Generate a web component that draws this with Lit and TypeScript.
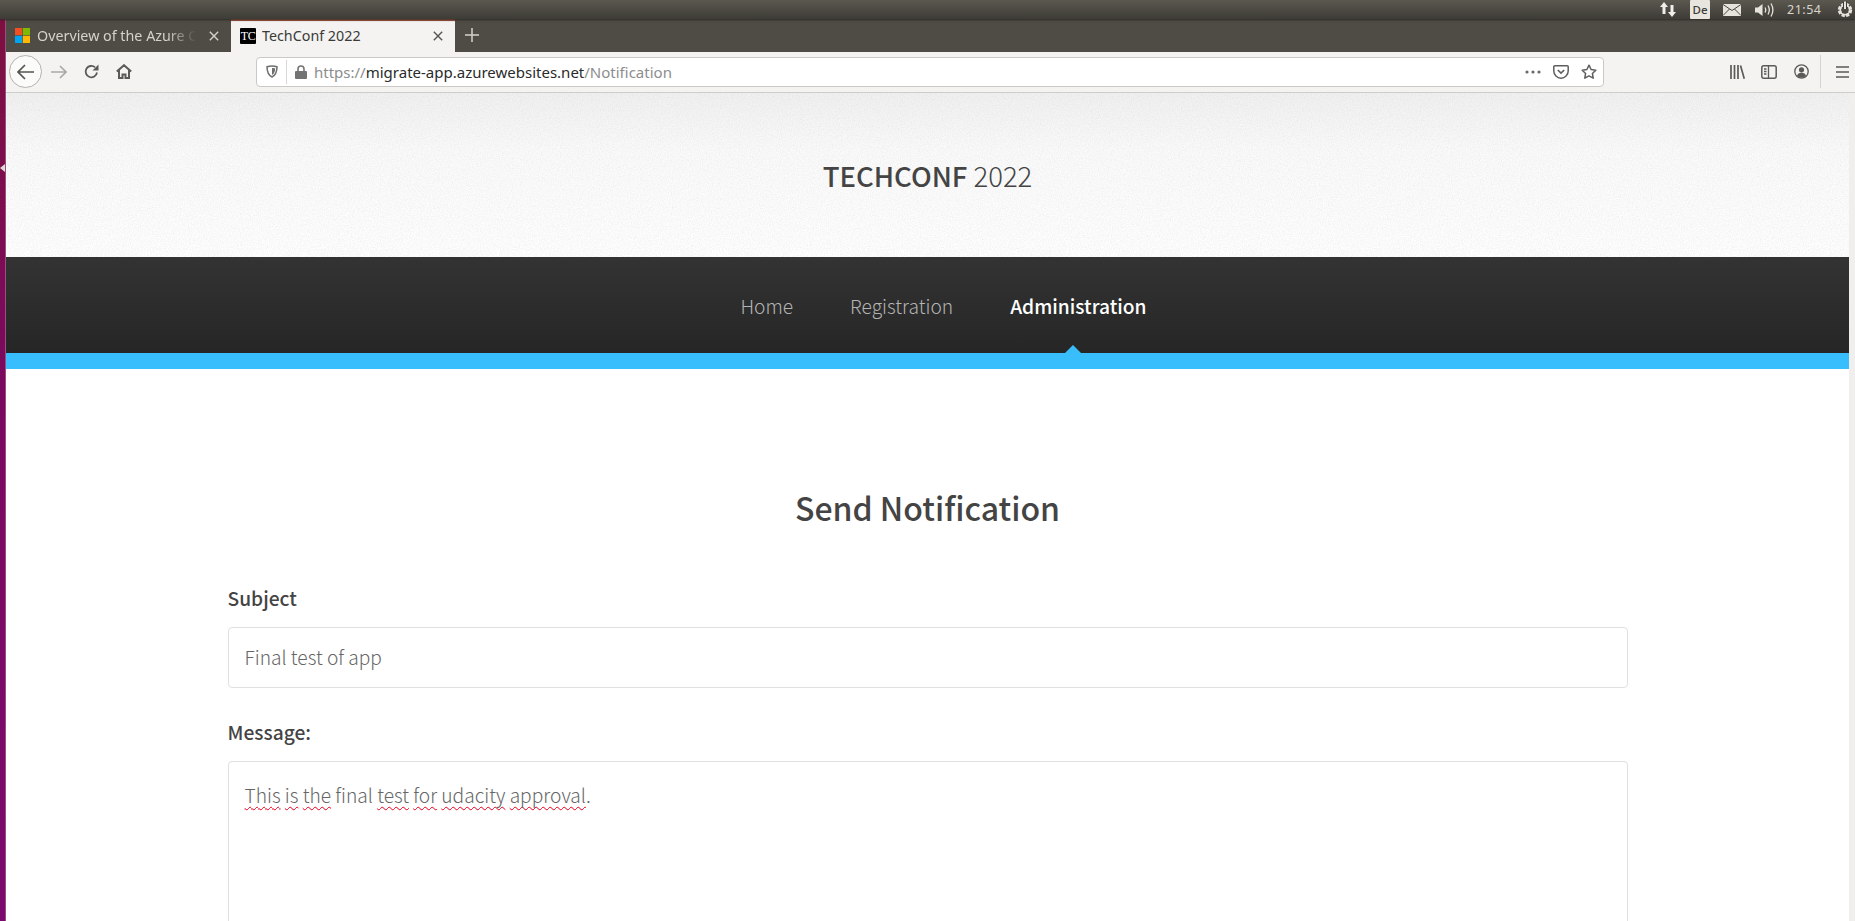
import { LitElement, html, css, svg } from "lit";
import { customElement } from "lit/decorators.js";

const closeX = svg`<svg class="ic" width="10" height="10" viewBox="0 0 10 10"><path d="M.8.8l8.4 8.4M9.200.8L.8 9.200" fill="none" stroke="currentColor" stroke-width="1.400"/></svg>`;

@customElement("app-root")
export class AppRoot extends LitElement {
  static styles = css`
    :host { display: block; width: 1855px; height: 921px; overflow: hidden; background: #fff; }
    * { box-sizing: border-box; }
    .ic { display: block; flex: none; }
    .ui { font-family: "Noto Sans", "Open Sans", sans-serif; }

    .panel { height: 19px; display: flex; align-items: center; justify-content: flex-end; padding-right: 2px;
      background: linear-gradient(#5b5850, #3e3c36); box-shadow: 0 1px 2px #2c2a26; position: relative; z-index: 2; color: #dedbd4; }
    .panel .arrows { margin-right: 13px; }
    .de { width: 20px; height: 19px; background: #e8e5df; color: #3c3b37; font-size: 11.500px; font-weight: 500; display: flex; align-items: center; justify-content: center; border-radius: 1px; margin-right: 13px; }
    .panel .mail { margin-right: 14px; }
    .panel .vol { margin-right: 13px; }
    .clock { font-size: 12.500px; letter-spacing: .5px; width: 38px; margin-right: 12px; white-space: nowrap; color: #d8d5ce; }

    .frame { display: flex; height: 902px; }
    .launcher { width: 6px; flex: none; position: relative; background: linear-gradient(#7d1040, #7a0a5e 40%, #7b0a6e); border-right: 1px solid #9a4f80; }
    .launcher::after { content: ""; position: absolute; top: 145px; left: 0; border: 4px solid transparent; border-left: 0; border-right: 5px solid #dedbd6; }
    .window { flex: 1; min-width: 0; display: flex; flex-direction: column; }

    .tabs { height: 33px; flex: none; background: #4f4c45; display: flex; align-items: stretch; }
    .tab { width: 225px; display: flex; align-items: center; padding-left: 9px; color: #d5d2cb; font-size: 14.300px; white-space: nowrap; }
    .tab.on { width: 224px; background: #f4f3f1; color: #3a3a38; border-top: 2px solid #b4583f; padding-bottom: 2px; }
    .fav { margin-right: 7px; }
    .tc { width: 16px; height: 16px; background: #000; color: #fff; font: 12px/16px "Liberation Serif", serif; text-align: center; border-radius: 1px; flex: none; letter-spacing: -.5px; margin-right: 6px; }
    .tab-text { flex: 1; overflow: hidden; }
    .tab:not(.on) .tab-text { -webkit-mask-image: linear-gradient(90deg, #000 78%, transparent 96%); mask-image: linear-gradient(90deg, #000 78%, transparent 96%); }
    .tab .x { margin: 0 12px 0 6px; color: #d5d2cb; }
    .tab.on .x { color: #55544f; }
    .plus { margin: 9px 0 0 10px; color: #d5d2cb; }

    .toolbar { height: 41px; flex: none; background: #f4f3f1; border-bottom: 1px solid #cfcdc9; display: flex; align-items: center; color: #5a5a58; padding-bottom: 1px; }
    .back { width: 33px; height: 33px; border-radius: 50%; border: 1px solid #b4b2ae; background: #fbfbfa; display: flex; align-items: center; justify-content: center; margin-left: 3px; margin-right: 9px; }
    .fwd { color: #aaa9a6; margin-right: 17px; }
    .reload { margin-right: 17px; }
    .url { width: 1348px; height: 30px; margin-left: 124px; background: #fff; border: 1px solid #cbc9c5; border-radius: 4px; display: flex; align-items: center; font-size: 15px; padding-left: 9px; }
    .url .sep { width: 1px; height: 24px; background: #d9d8d5; margin: 0 8px 0 8px; }
    .url .lock { margin-right: 7px; color: #737373; }
    .url .shield { color: #6e6e6c; }
    .addr { flex: 1; white-space: nowrap; color: #8d8d8d; }
    .addr b { font-weight: 400; color: #2a2a2a; }
    .url .dots { margin-right: 12px; }
    .url .pocket { margin-right: 12px; }
    .url .star { margin-right: 6px; }
    .lib { margin-left: 126px; margin-right: 16px; }
    .side { margin-right: 17px; }
    .tb-sep { width: 1px; height: 33px; background: #d6d4d0; margin: 0 15px 0 11px; }

    .viewport { flex: 1; min-height: 0; display: flex; }
    .scroll { width: 6px; flex: none; background: #f0efed; }
    .page { flex: 1; min-width: 0; font-family: "Noto Sans CJK SC", "Noto Sans", sans-serif; color: #444; overflow: hidden; }

    .hero { height: 164px; display: flex; align-items: center; justify-content: center; position: relative;
      background: linear-gradient(#f0f0f0, #fafafa 35%, #fefefe); padding-top: 1px; }
    .noise { position: absolute; inset: 0; width: 100%; height: 100%; }
    .brand { position: relative; font-size: 27.500px; line-height: 1; font-weight: 200; margin: 0; color: #444; }
    .brand strong { font-weight: 500; }

    .nav { height: 96px; background: linear-gradient(#333333, #262626); display: flex; justify-content: center; align-items: stretch; gap: 57px; font-size: 19.200px; font-weight: 200; color: #b4b4b4; padding: 1px 0 0 32px; }
    .nav a { position: relative; color: inherit; text-decoration: none; display: flex; align-items: center; }
    .nav a.on { color: #fff; font-weight: 500; }
    .nav a.on::after { content: ""; position: absolute; left: 50%; margin-left: -13px; bottom: 0; border: 8px solid transparent; border-top: 0; border-bottom-color: #38bdf8; }
    .strip { height: 16px; background: #38befc; }

    main { width: 1400px; margin: 0 auto; padding-top: 113px; }
    h2 { margin: 0 0 51px; text-align: center; font-size: 32px; line-height: 50px; font-weight: 500; color: #444; }
    label { display: block; font-size: 19.200px; line-height: 30px; font-weight: 500; color: #444; margin-bottom: 14px; }
    .field { width: 100%; height: 61px; display: block; border: 1px solid #e0e0e0; border-radius: 4px; padding: 0 16px 2px; font: 200 19.200px "Noto Sans CJK SC", "Noto Sans", sans-serif; color: #666; background: #fff; outline: none; margin-bottom: 29px; }
    .area { height: 260px; padding: 16px 16px; line-height: 34px; white-space: pre-wrap; }
    .sp { text-decoration: underline wavy #e8001c 1px; text-underline-offset: 3px; text-decoration-skip-ink: none; }
  `;

  render() {
    return html`
      <div class="panel ui">
        <svg class="ic arrows" width="18" height="17" viewBox="0 0 18 17"><path d="M5 1L1 6h2.500v7h3V6H9zM13 16l4-5h-2.500V4h-3v7H9z" fill="#f0eeea"/></svg>
        <div class="de">De</div>
        <svg class="ic mail" width="18" height="12" viewBox="0 0 18 12"><rect width="18" height="12" fill="#e6e3dd"/><path d="M0 .5l9 6 9-6M0 11.500l6.500-6.500M18 11.500L11.500 5" fill="none" stroke="#4a4842" stroke-width="1"/></svg>
        <svg class="ic vol" width="19" height="16" viewBox="0 0 19 16"><path d="M0 5.500h3L7.500 2v12L3 10.500H0z" fill="#e6e3dd"/><path d="M10 5.500q1.500 2.500 0 5M13 3.500q2.600 4.500 0 9M16 1.500q3.800 6.500 0 13" fill="none" stroke="#e6e3dd" stroke-width="1.300"/></svg>
        <div class="clock">21:54</div>
        <svg class="ic" width="16" height="17" viewBox="0 0 16 17"><circle cx="8" cy="9" r="5.500" fill="none" stroke="#e6e3dd" stroke-width="3.400" stroke-dasharray="3 1.320"/><circle cx="8" cy="9" r="4.800" fill="none" stroke="#e6e3dd" stroke-width="1.600"/><path d="M8 .5v7.500" stroke="#3e3c36" stroke-width="4"/><path d="M8 .5v7.500" stroke="#e6e3dd" stroke-width="2"/></svg>
      </div>

      <div class="frame">
        <div class="launcher"></div>
        <div class="window">
          <div class="tabs ui">
            <div class="tab">
              <svg class="ic fav" width="15" height="15" viewBox="0 0 15 15"><rect width="7.200" height="7.200" fill="#f25022"/><rect x="7.800" width="7.200" height="7.200" fill="#7fba00"/><rect y="7.800" width="7.200" height="7.200" fill="#00a4ef"/><rect x="7.800" y="7.800" width="7.200" height="7.200" fill="#ffb900"/></svg>
              <span class="tab-text">Overview of the Azure Cloud</span>
              <span class="x">${closeX}</span>
            </div>
            <div class="tab on">
              <span class="tc">TC</span>
              <span class="tab-text">TechConf 2022</span>
              <span class="x">${closeX}</span>
            </div>
            <svg class="ic plus" width="14" height="14" viewBox="0 0 14 14"><path d="M7 0v14M0 7h14" stroke="currentColor" stroke-width="1.500"/></svg>
          </div>

          <div class="toolbar ui">
            <div class="back"><svg class="ic" width="17" height="16" viewBox="0 0 17 16"><path d="M8 1L1 8l7 7M1 8h16" fill="none" stroke="#55554f" stroke-width="1.700"/></svg></div>
            <svg class="ic fwd" width="16" height="14" viewBox="0 0 16 14"><path d="M9 1l6 6-6 6M15 7H0" fill="none" stroke="currentColor" stroke-width="1.600"/></svg>
            <svg class="ic reload" width="15" height="15" viewBox="0 0 15 15"><path d="M13 8.500A5.700 5.700 0 1 1 11 3.200" fill="none" stroke="currentColor" stroke-width="1.800"/><path d="M14.500 .5v6h-6z" fill="currentColor"/></svg>
            <svg class="ic" width="16" height="15" viewBox="0 0 16 15"><path d="M.8 7.500L8 1.200l7.200 6.300M3 6v8h3.500v-3.500h3V14H13V6" fill="none" stroke="currentColor" stroke-width="2"/></svg>
            <div class="url">
              <svg class="ic shield" width="12" height="13" viewBox="0 0 12 13"><path d="M1 1.800Q6 .2 11 1.800 11 9.500 6 12 1 9.500 1 1.800z" fill="none" stroke="currentColor" stroke-width="1.500"/><path d="M6 3v7Q9 8.500 9.200 3.200z" fill="currentColor"/></svg>
              <span class="sep"></span>
              <svg class="ic lock" width="12" height="14" viewBox="0 0 12 14"><path d="M3 6V4a3 3 0 0 1 6 0v2" fill="none" stroke="currentColor" stroke-width="1.600"/><rect y="6" width="12" height="8" rx="1" fill="currentColor"/></svg>
              <span class="addr">https://<b>migrate-app.azurewebsites.net</b>/Notification</span>
              <svg class="ic dots" width="16" height="4" viewBox="0 0 16 4"><circle cx="2" cy="2" r="1.600" fill="#6a6a68"/><circle cx="8" cy="2" r="1.600" fill="#6a6a68"/><circle cx="14" cy="2" r="1.600" fill="#6a6a68"/></svg>
              <svg class="ic pocket" width="16" height="14" viewBox="0 0 16 14"><path d="M1.800.8h12.400a1 1 0 0 1 1 1V6a7.200 7.200 0 0 1-14.400 0V1.800a1 1 0 0 1 1-1z" fill="none" stroke="#5e5e5c" stroke-width="1.500"/><path d="M4.800 5L8 8l3.200-3" fill="none" stroke="#5e5e5c" stroke-width="1.700"/></svg>
              <svg class="ic star" width="16" height="15" viewBox="0 0 16 15"><path d="M8 1.200l2.100 4.300 4.700.7-3.400 3.300.8 4.700L8 11.900l-4.200 2.300.8-4.700L1.200 6.200l4.700-.7z" fill="none" stroke="#5e5e5c" stroke-width="1.500" stroke-linejoin="round"/></svg>
            </div>
            <svg class="ic lib" width="15" height="14" viewBox="0 0 15 14"><path d="M1 0v14M4.500 0v14M8 0v14M10.500 .5l3.800 13.300" fill="none" stroke="currentColor" stroke-width="1.700"/></svg>
            <svg class="ic side" width="16" height="14" viewBox="0 0 16 14"><rect x=".8" y=".8" width="14.400" height="12.400" rx="2" fill="none" stroke="currentColor" stroke-width="1.500"/><path d="M7.500 1v12M3 4h2.500M3 6.500h2.500M3 9h2.500" fill="none" stroke="currentColor" stroke-width="1.300"/></svg>
            <svg class="ic" width="15" height="15" viewBox="0 0 15 15"><circle cx="7.500" cy="7.500" r="6.700" fill="none" stroke="currentColor" stroke-width="1.300"/><circle cx="7.500" cy="5.800" r="2.600" fill="currentColor"/><path d="M3 12q.8-3.200 4.500-3.200T12 12q-2 1.800-4.500 1.800T3 12z" fill="currentColor"/></svg>
            <span class="tb-sep"></span>
            <svg class="ic" width="13" height="12" viewBox="0 0 13 12"><path d="M0 1h13M0 6h13M0 11h13" stroke="currentColor" stroke-width="1.600"/></svg>
          </div>

          <div class="viewport">
            <div class="page">
              <header class="hero">
                <svg class="noise" aria-hidden="true"><filter id="n"><feTurbulence type="fractalNoise" baseFrequency="0.9" numOctaves="2" seed="4"/><feColorMatrix values="0 0 0 0 0.45  0 0 0 0 0.45  0 0 0 0 0.45  0 0 0 0.35 -0.13"/></filter><rect width="100%" height="100%" filter="url(#n)"/></svg>
                <h1 class="brand"><strong>TECHCONF</strong> 2022</h1>
              </header>
              <nav class="nav">
                <a>Home</a>
                <a>Registration</a>
                <a class="on">Administration</a>
              </nav>
              <div class="strip"></div>
              <main>
                <h2>Send Notification</h2>
                <label for="subject">Subject</label>
                <input id="subject" class="field" .value=${"Final test of app"} spellcheck="false" />
                <label>Message:</label>
                <div class="field area" role="textbox"><span class="sp">This</span> <span class="sp">is</span> <span class="sp">the</span> final <span class="sp">test</span> <span class="sp">for</span> <span class="sp">udacity</span> <span class="sp">approval</span>.</div>
              </main>
            </div>
            <div class="scroll"></div>
          </div>
        </div>
      </div>
    `;
  }
}
